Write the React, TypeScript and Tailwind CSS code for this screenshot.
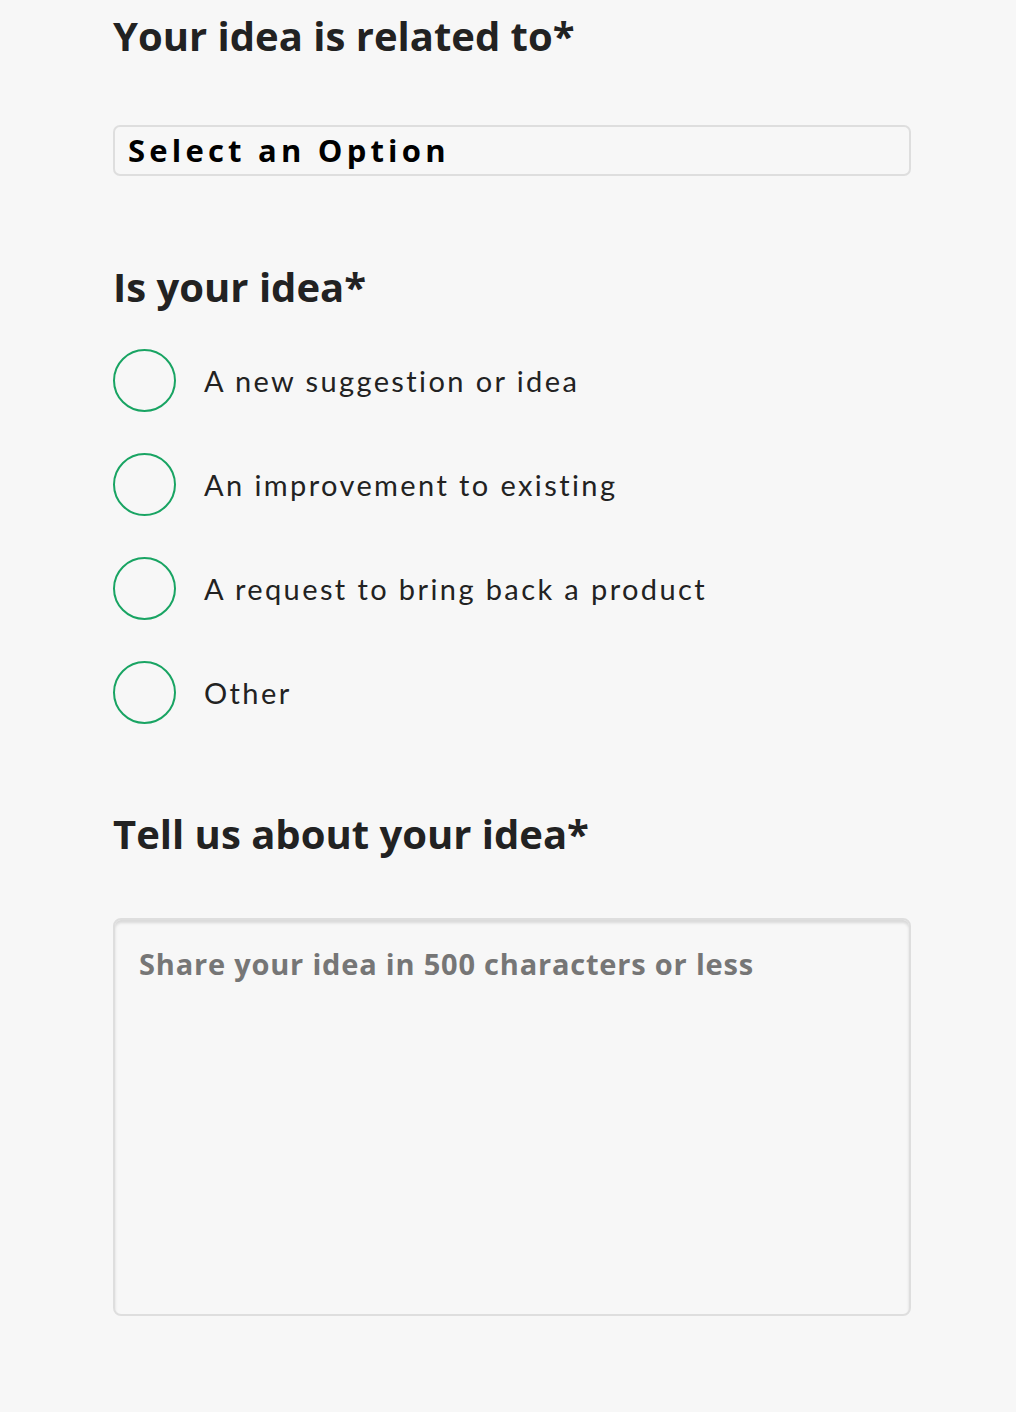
import { useState } from 'react';

const OPTIONS = [
  'A new suggestion or idea',
  'An improvement to existing',
  'A request to bring back a product',
  'Other',
];

export default function App() {
  const [picked, setPicked] = useState<number | null>(null);

  return (
    <div className="min-h-[1412px] bg-[#f7f7f7] pl-[113px] font-['Open_Sans',_sans-serif] text-[#222]">
      <form className="w-[798px] pt-[8px]">
        <h2 className="text-[40px] font-bold leading-[56px]">
          Your idea is related to*
        </h2>

        <div className="mt-[61px] flex h-[51px] items-center rounded-[7px] border-2 border-[#dedede] px-[13px] text-[31px] font-bold tracking-[4.2px] text-black">
          Select an Option
        </div>

        <h2 className="mt-[83px] text-[40px] font-bold leading-[56px]">
          Is your idea*
        </h2>

        <div className="mt-[34px] flex flex-col gap-[41px] font-['Lato',_sans-serif]">
          {OPTIONS.map((label, i) => (
            <label key={label} className="flex cursor-pointer items-center gap-[28px]">
              <span
                onClick={() => setPicked(i)}
                className="flex h-[63px] w-[63px] shrink-0 items-center justify-center rounded-full border-2 border-[#19a463]"
              >
                {picked === i && <span className="h-[31px] w-[31px] rounded-full bg-[#19a463]" />}
              </span>
              <span className="text-[29px] tracking-[2.4px] text-[#222]">{label}</span>
            </label>
          ))}
        </div>

        <h2 className="mt-[82px] text-[40px] font-bold leading-[56px]">
          Tell us about your idea*
        </h2>

        <textarea
          placeholder="Share your idea in 500 characters or less"
          className="mt-[56px] block h-[398px] w-full resize-none rounded-[8px] border-2 border-[#dedede] bg-transparent px-[24px] py-[22px] text-[29px] font-bold tracking-[0.8px] text-[#222] shadow-[inset_0_3px_3px_rgba(0,0,0,0.12)] outline-none placeholder:text-[#767676]"
        />
      </form>
    </div>
  );
}
